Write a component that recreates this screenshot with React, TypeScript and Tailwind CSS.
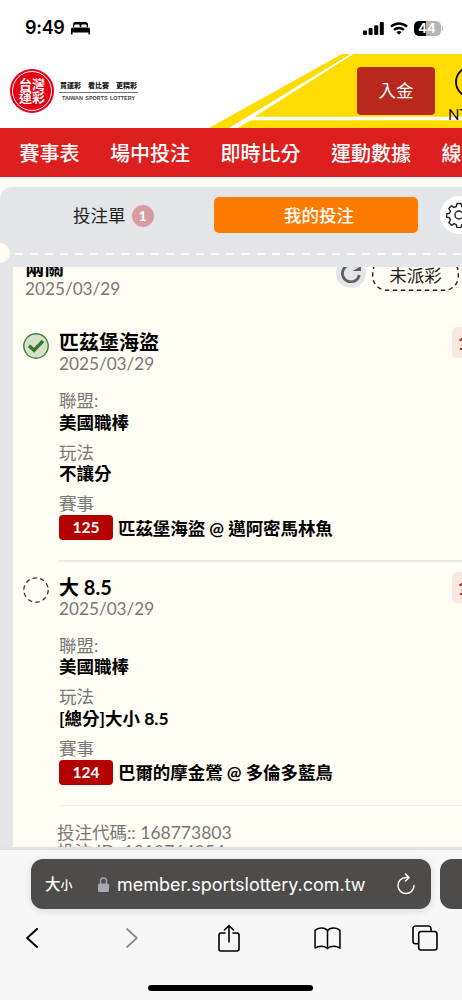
type Bet = {
  pick: string;
  date: string;
  league: string;
  market: string;
  code: string;
  match: string;
  won: boolean;
};

const NAV = ['賽事表', '場中投注', '即時比分', '運動數據', '線上直播'];

const BETS: Bet[] = [
  {
    pick: '匹茲堡海盜',
    date: '2025/03/29',
    league: '美國職棒',
    market: '不讓分',
    code: '125',
    match: '匹茲堡海盜 @ 邁阿密馬林魚',
    won: true,
  },
  {
    pick: '大 8.5',
    date: '2025/03/29',
    league: '美國職棒',
    market: '[總分]大小 8.5',
    code: '124',
    match: '巴爾的摩金鶯 @ 多倫多藍鳥',
    won: false,
  },
];

function StatusBar() {
  return (
    <div className="flex h-[54px] shrink-0 items-center justify-between bg-white pl-[25px] pr-[19px] pt-[2px]">
      <div className="flex items-center gap-1.5 font-['Inter','Liberation_Sans',sans-serif]">
        <span className="text-[18px] font-semibold leading-[22px] tracking-[-0.3px] text-black">9:49</span>
        <svg width="19" height="13" viewBox="0 0 19 13" fill="black">
          <path d="M2 5V2.400C2 1 2.900 0 4.300 0h10.400C16.100 0 17 1 17 2.400V5h-1.300V3.900c0-.9-.5-1.400-1.400-1.400h-2.600c-.9 0-1.400.5-1.400 1.400V5H8.700V3.900c0-.9-.5-1.400-1.400-1.400H4.700c-.9 0-1.400.5-1.400 1.400V5z" />
          <path d="M0 12.600V7.500C0 6.300.8 5.600 2 5.600h15c1.200 0 2 .7 2 1.900v5.100h-1.500v-2h-16v2z" />
        </svg>
      </div>
      <div className="flex items-center gap-[6px]">
        <svg width="21" height="13" viewBox="0 0 21 13" fill="black">
          <rect x="0" y="8.500" width="4" height="4.500" rx="1" />
          <rect x="5.600" y="6" width="4" height="7" rx="1" />
          <rect x="11.200" y="3.200" width="4" height="9.800" rx="1" />
          <rect x="16.800" y="0" width="4" height="13" rx="1" />
        </svg>
        <svg width="18" height="13" viewBox="0 0 18 13" fill="none" stroke="black" strokeWidth="2.400">
          <path d="M1 4.700a11.500 11.500 0 0 1 16 0" />
          <path d="M4 8a7.200 7.200 0 0 1 10 0" />
          <path d="M9 12.700 6.500 10.200a3.600 3.600 0 0 1 5 0z" fill="black" stroke="none" />
        </svg>
        <div className="flex items-center gap-px">
          <div className="flex h-[15px] w-[27px] items-center justify-center rounded-[5px] bg-[linear-gradient(90deg,#000_44%,#b4b4b4_44%)] font-['Inter',sans-serif] text-[13px] font-bold leading-[14px] text-white">
            44
          </div>
          <div className="h-[5px] w-[1.5px] rounded-r-full bg-[#b4b4b4]" />
        </div>
      </div>
    </div>
  );
}

function Header() {
  return (
    <header className="relative flex h-[74px] shrink-0 items-start bg-white">
      <svg className="absolute inset-0" width="462" height="74" viewBox="0 0 462 74">
        <path d="M342 0H462V74H209z" fill="#ffdc00" />
        <path d="M350.500 0 229 74H237.500L251 66.300H462V62.700H254.500L353.500 0z" fill="white" />
      </svg>
      <div className="relative ml-[10px] mt-[15px] flex items-center">
        <div className="flex size-[44px] items-center justify-center rounded-full bg-[#e60012] p-[2px]">
          <div className="flex size-[40px] flex-col items-center justify-center rounded-full border border-white text-[13px] font-bold leading-[13.500px] text-white">
            <span>台灣</span>
            <span>運彩</span>
          </div>
        </div>
        <div className="ml-[5px] flex w-[79px] flex-col items-center">
          <div className="flex h-[13px] w-full items-center justify-between whitespace-nowrap border-b border-[#777] px-px pb-0.5 text-[7px] font-black leading-[10px] text-[#222]">
            <span>買運彩</span>
            <span>看比賽</span>
            <span>更精彩</span>
          </div>
          <span className="mt-px whitespace-nowrap font-['Liberation_Sans',sans-serif] text-[5.400px] font-bold leading-[8px] text-[#444] [word-spacing:1px]">
            TAIWAN SPORTS LOTTERY
          </span>
        </div>
      </div>
      <button className="relative ml-[219px] mt-[13px] flex h-[48px] w-[78px] shrink-0 items-center justify-center rounded-[4px] bg-[#b8281c] text-[17.500px] text-white">
        入金
      </button>
      <div className="relative ml-[13px] mt-[12px] flex w-[40px] shrink-0 flex-col">
        <svg className="ml-[7px]" width="32" height="32" viewBox="0 0 32 32" fill="none" stroke="black" strokeWidth="1.800">
          <circle cx="16" cy="16" r="15" />
        </svg>
        <span className="mt-[8px] text-[15px] leading-[16px] text-black">NT$0</span>
      </div>
    </header>
  );
}

function TicketTabs() {
  return (
    <div className="relative h-[80px] shrink-0 rounded-tl-[12px] bg-[#e4e5e8]">
      <div className="flex items-center pt-[9px]">
        <div className="flex w-[214px] shrink-0 items-center gap-[6px] pl-[73px] pt-px text-[17.500px] leading-[22px] text-[#222]">
          投注單
          <span className="flex size-[22px] items-center justify-center rounded-full bg-[#d89b9f] text-[14px] font-bold leading-none text-white">
            1
          </span>
        </div>
        <button className="flex h-[36px] w-[204px] shrink-0 items-center justify-center rounded-[5px] bg-[#ff7b00] pl-[6px] pt-[2px] text-[17.500px] font-medium text-white">
          我的投注
        </button>
        <div className="ml-[21.500px] flex size-[38px] shrink-0 items-center justify-center rounded-full bg-white">
          <svg width="26" height="26" viewBox="0 0 26 26" fill="none" stroke="#222" strokeWidth="1.400" strokeLinejoin="round">
            <path d="M11 1.500h4l.7 3 2.200.9 2.600-1.600 2.700 2.700-1.600 2.600.9 2.200 3 .7v3l-3 .9-.9 2.100 1.600 2.600-2.700 2.700-2.600-1.600-2.200.9-.7 3h-4l-.7-3-2.200-.9-2.600 1.600-2.700-2.700 1.600-2.600-.9-2.100-3-.9v-3l3-.7.9-2.200-1.600-2.600 2.700-2.700 2.600 1.600 2.200-.9z" />
            <circle cx="13" cy="13" r="4" />
          </svg>
        </div>
      </div>
      <div className="absolute -left-[10px] top-[56px] size-[20px] rounded-full bg-[#fffdf4]" />
      <div className="absolute left-[15px] right-0 top-[66px] h-[2px] bg-[repeating-linear-gradient(90deg,#fffdf4_0,#fffdf4_8px,transparent_8px,transparent_15.1px)]" />
    </div>
  );
}

function BetRow({ bet }: { bet: Bet }) {
  return (
    <div className="flex">
      <div className="mr-[10px] shrink-0">
        {bet.won ? (
          <svg width="26" height="26" viewBox="0 0 26 26" fill="none">
            <circle cx="13" cy="13" r="12.200" fill="#d5e2c9" stroke="#3c8432" strokeWidth="1.400" />
            <path d="M6 12.700 11 17.300l9-9.300" stroke="#34782a" strokeWidth="3.400" />
          </svg>
        ) : (
          <svg width="26" height="26" viewBox="0 0 26 26" fill="none">
            <circle cx="13" cy="13" r="12.200" stroke="#333" strokeWidth="1.300" strokeDasharray="4.400 3.270" />
          </svg>
        )}
      </div>
      <div className="w-[403px] shrink-0">
        <div className="-mt-[0.500px] flex h-[21px] items-start justify-between">
          <h3 className="text-[20px] font-bold leading-[21px] text-black">{bet.pick}</h3>
          <span className="-mr-[22px] -mt-[5px] flex h-[31px] w-[32px] shrink-0 items-center justify-center rounded-[5px] bg-[#f9e7e2] text-[19px] font-bold text-[#c1272d]">
            全
          </span>
        </div>
        <p className="text-[17.200px] leading-[21px] text-[#777]">{bet.date}</p>
        <dl className="mt-[16px] text-[17.500px] leading-[21px]">
          <dt className="text-[#777]">聯盟:</dt>
          <dd className="mt-[0.500px] font-bold text-black">{bet.league}</dd>
          <dt className="mt-[9px] text-[#777]">玩法</dt>
          <dd className="mt-[0.500px] font-bold text-black">{bet.market}</dd>
          <dt className="mt-[9px] text-[#777]">賽事</dt>
          <dd className="mt-px flex h-[25px] items-center gap-[5px] font-bold text-black">
            <span className="flex h-full w-[54px] items-center justify-center rounded-[4px] bg-[#b40000] text-[15.500px] text-white">
              {bet.code}
            </span>
            <span className="pt-[1.500px] tracking-[-0.070px]">{bet.match}</span>
          </dd>
        </dl>
        <div className="mt-[20px] h-[1.700px] bg-[#ecebe6]" />
      </div>
    </div>
  );
}

function TicketBody() {
  return (
    <div className="h-[580px] shrink-0 overflow-hidden border-l-[13px] border-[#e4e5e8] bg-[#fffdf4]">
      {/* summary line, scrolled partly under the tab bar */}
      <div className="-mt-[9px] flex h-[74.500px] items-start justify-between pl-[12px] pr-[3px]">
        <div>
          <h2 className="-mt-[1.500px] text-[19.500px] font-bold leading-[22px] text-black">兩關</h2>
          <p className="text-[17.200px] leading-[20px] text-[#777]">2025/03/29</p>
        </div>
        <div className="flex gap-[6px]">
          <div className="flex size-[30px] items-center justify-center rounded-full bg-[#e4e5e8]">
            <svg width="20" height="20" viewBox="0 0 20 20" fill="none">
              <path d="M15 3.500A8.500 8.500 0 1 0 18.300 12" stroke="#606060" strokeWidth="2.800" />
              <path d="M20 3v5h-8.500z" fill="#606060" />
            </svg>
          </div>
          <svg width="87" height="33" viewBox="0 0 87 33">
            <rect x="0.700" y="0.700" width="85.600" height="31.600" rx="14" fill="none" stroke="#222" strokeWidth="1.400" strokeDasharray="4.500 3.500" />
            <text x="43.500" y="24" textAnchor="middle" fontSize="17.500" fill="#222">未派彩</text>
          </svg>
        </div>
      </div>
      <div className="flex flex-col gap-[15.500px] pl-[10px]">
        {BETS.map((bet) => (
          <BetRow key={bet.code} bet={bet} />
        ))}
      </div>
      <div className="mt-[16.500px] pl-[44px] text-[17.500px] leading-[19px] text-[#777]">
        <p>投注代碼:: 168773803</p>
        <p>投注 ID: 1910764054</p>
      </div>
    </div>
  );
}

function BrowserBar() {
  return (
    <footer className="flex h-[150px] shrink-0 flex-col bg-[#f7f7f7]">
      <div className="flex w-full gap-[9px] pl-[31px] pt-[9px]">
        <div className="flex h-[50px] w-[400px] shrink-0 items-center rounded-[12px] bg-[#4d4c4a] pl-[14px] font-['Inter','Noto_Sans_CJK_TC',sans-serif] text-white shadow-[0_2px_10px_rgba(0,0,0,0.12)]">
          <span className="flex w-[53px] items-baseline pt-[2px]">
            <span className="text-[15.500px] font-medium">大</span>
            <span className="text-[12px] font-medium">小</span>
          </span>
          <svg width="11" height="15" viewBox="0 0 11 15">
            <path d="M2.500 7V4a3 3 0 0 1 6 0v3" fill="none" stroke="#aaa8b0" strokeWidth="1.300" />
            <rect y="6.500" width="11" height="8.500" rx="1.500" fill="#aaa8b0" />
          </svg>
          <span className="ml-[8px] w-[249px] whitespace-nowrap text-[18px] tracking-[-0.030px]">member.sportslottery.com.tw</span>
          <svg className="ml-[31px]" width="18" height="22" viewBox="0 0 18 22" fill="none" stroke="white" strokeWidth="1.500" strokeLinecap="round" strokeLinejoin="round">
            <path d="M12 4.500H9a8 8 0 1 0 8 8" />
            <path d="m8.500 1 3.500 3.500-3.500 3.500" />
          </svg>
        </div>
        <div className="h-[50px] w-[400px] rounded-l-[12px] bg-[#4d4c4a]" />
      </div>
      <div className="-ml-[17px] mt-[13px] grid h-[32px] w-[492px] shrink-0 grid-cols-5 items-center justify-items-center">
        <svg width="12" height="20" viewBox="0 0 12 20" fill="none" stroke="black" strokeWidth="2" strokeLinecap="round" strokeLinejoin="round">
          <path d="M11 1 1.200 10 11 19" />
        </svg>
        <svg className="ml-[3px]" width="12" height="20" viewBox="0 0 12 20" fill="none" stroke="#8a8a8a" strokeWidth="1.700" strokeLinecap="round" strokeLinejoin="round">
          <path d="M1 1 10.800 10 1 19" />
        </svg>
        <svg width="22" height="28" viewBox="0 0 22 28" fill="none" stroke="black" strokeWidth="1.600" strokeLinecap="round" strokeLinejoin="round">
          <path d="M7 9H3a2 2 0 0 0-2 2v14a2 2 0 0 0 2 2h16a2 2 0 0 0 2-2V11a2 2 0 0 0-2-2h-4" />
          <path d="M11 18V1.500M6.500 6 11 1.500 15.500 6" />
        </svg>
        <svg width="27" height="23" viewBox="0 0 28 24" fill="none" stroke="black" strokeWidth="1.600" strokeLinejoin="round">
          <path d="M14 4C12 .5 4.500 0 1 3.500V22c3.500-2.500 10.500-2.500 13 .5 2.500-3 9.500-3 13-.5V3.500C23.500 0 16 .5 14 4zV22" />
        </svg>
        <svg className="-ml-px" width="26" height="26" viewBox="0 0 26 26" fill="none" stroke="black" strokeWidth="1.600">
          <path d="M6.500 18.800H3.500A2.500 2.500 0 0 1 1 16.300V3.500A2.500 2.500 0 0 1 3.500 1h13A2.500 2.500 0 0 1 19 3.500v3" />
          <rect x="6.700" y="6.500" width="18.300" height="18.500" rx="2.500" />
        </svg>
      </div>
      <div className="ml-[148px] mt-[31px] h-[6px] w-[165px] rounded-full bg-black" />
    </footer>
  );
}

function App() {
  return (
    <div className="flex h-[1000px] w-[462px] flex-col overflow-hidden bg-[#fffdf4] font-['Lato','Noto_Sans_CJK_TC',sans-serif]">
      <StatusBar />
      <Header />
      <nav className="mb-[10px] flex h-[49px] shrink-0 items-center gap-[30.500px] whitespace-nowrap bg-[#dd1f20] pl-[19.500px] text-[20px] font-medium text-white">
        {NAV.map((item) => (
          <a key={item}>{item}</a>
        ))}
      </nav>
      <TicketTabs />
      <TicketBody />
      <div className="h-[3px] shrink-0 bg-[#e1e2e6]" />
      <BrowserBar />
    </div>
  );
}

export default App;
